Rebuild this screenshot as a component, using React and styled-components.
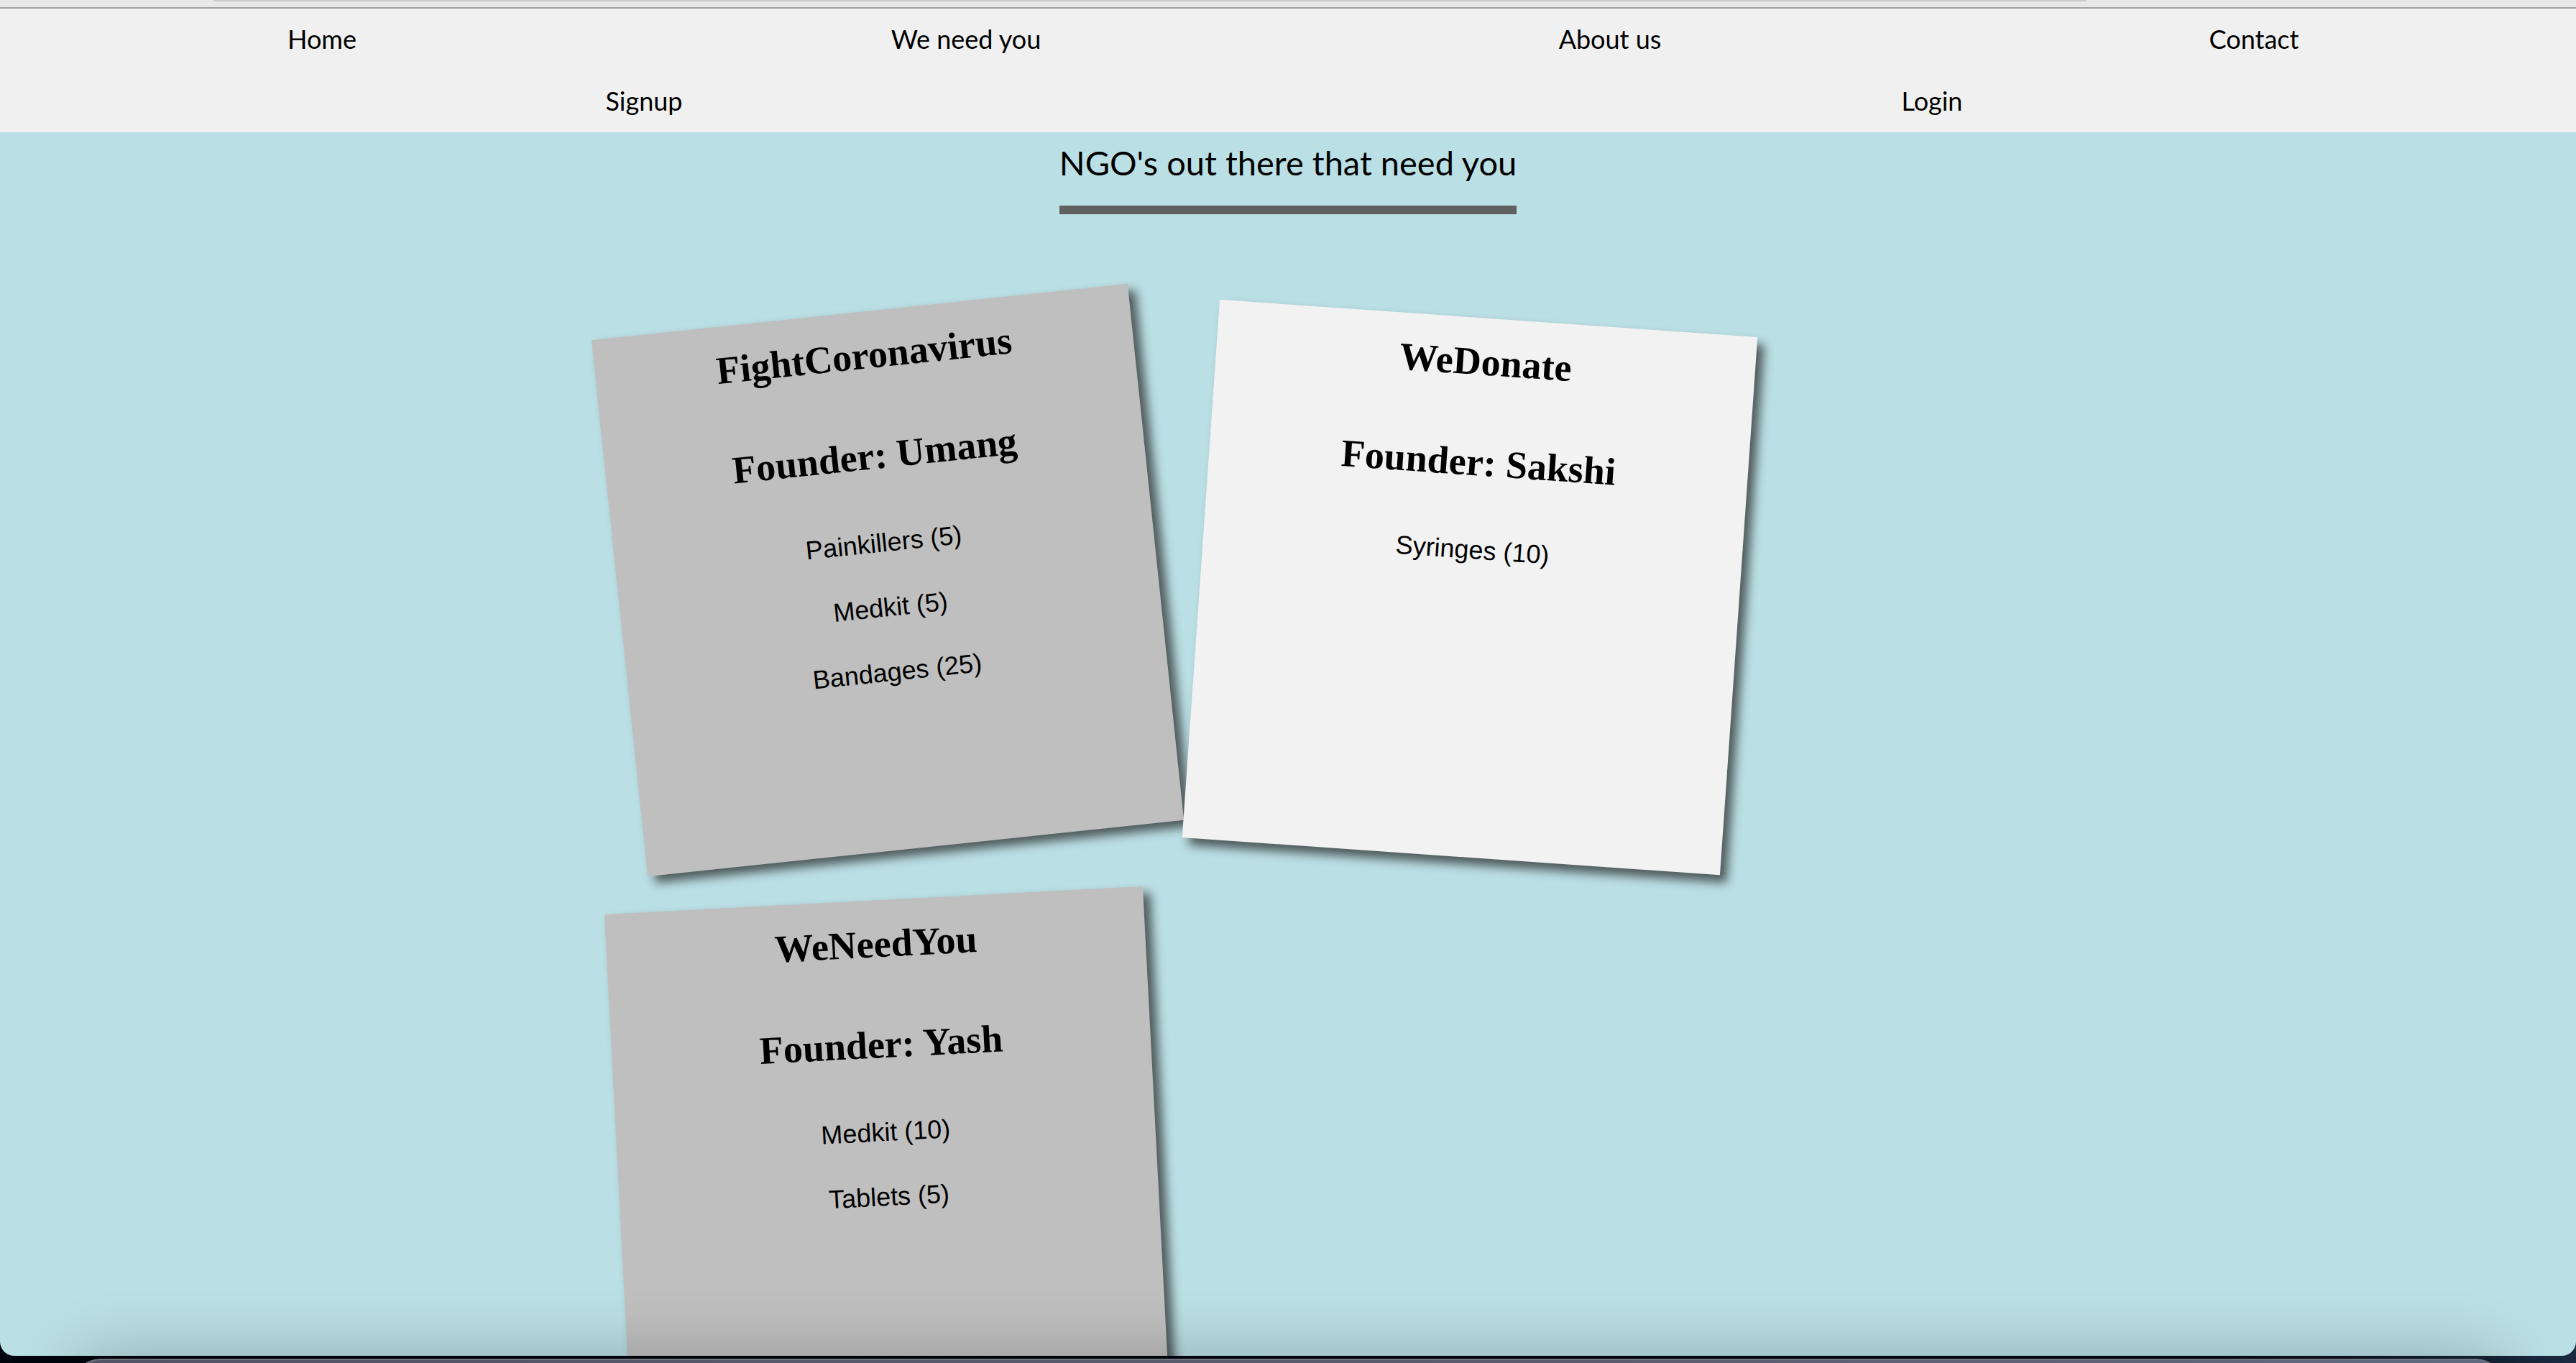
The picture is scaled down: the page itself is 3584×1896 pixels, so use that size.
import React from "react";
import styled, { createGlobalStyle } from "styled-components";

const GlobalStyle = createGlobalStyle`
  *, *::before, *::after { box-sizing: border-box; }
  body { margin: 0; background: #01040b; color: #000; }
  h1, h2, p, ul { margin: 0; padding: 0; }
  ul { list-style: none; }
`;

const Desktop = styled.div`
  display: flex;
  flex-direction: column;
  height: 100vh;
  overflow: hidden;
  background: linear-gradient(to right, #01040b 0%, #03070f 85%, #1c2a40 100%);
`;

const BrowserWindow = styled.div`
  display: flex;
  flex-direction: column;
  flex: 1;
  min-height: 0;
  overflow: hidden;
  border-radius: 0 0 20px 20px;
  background: #badfe4;
`;

const Toolbar = styled.div`
  flex: none;
  height: 12px;
  padding: 0 19% 0 8.3%;
  background: #e8e8e8;
  border-bottom: 2px solid #a0a0a0;
`;

const AddressBar = styled.div`
  height: 2px;
  background: #c8c8c8;
  border-radius: 0 0 6px 6px;
`;

const Nav = styled.nav`
  flex: none;
  background: #f0f0f0;
`;

const NavRow = styled.ul`
  display: flex;
`;

const NavItem = styled.li`
  flex: 1;
  text-align: center;
`;

const NavLink = styled.a`
  display: block;
  width: fit-content;
  margin: 0 auto;
  padding-bottom: 2px;
  font: 400 36px/84px Lato, sans-serif;
  color: #000;
  text-decoration: none;
`;

const Main = styled.main`
  display: flex;
  flex-direction: column;
  align-items: center;
  gap: 134px;
`;

const Heading = styled.h1`
  padding: 12px 0 30px;
  border-bottom: 12px solid #606060;
  font: 400 47px/60px Lato, sans-serif;
`;

const Board = styled.ul`
  display: flex;
  flex-wrap: wrap;
  gap: 60px;
  width: 52%;
`;

const Note = styled.li`
  display: flex;
  flex-direction: column;
  align-items: center;
  width: 750px;
  height: 750px;
  padding-top: 30px;
  background: ${(p) => (p.$light ? "#f2f2f2" : "#bfbfbf")};
  box-shadow: 10px 10px 14px rgba(33, 33, 33, 0.7);
  transform: rotate(${(p) => p.$tilt}deg);

  &:nth-child(even) { margin-top: 10px; }
`;

const NoteTitles = styled.div`
  display: flex;
  flex-direction: column;
  gap: 78px;
  margin-bottom: 70px;
  text-align: center;
`;

const NoteTitle = styled.h2`
  font: 700 54px/62px "Liberation Serif", serif;
`;

const Supplies = styled.ul`
  display: flex;
  flex-direction: column;
  gap: 48px;
`;

const Supply = styled.li`
  font: 400 36px/42px "Liberation Sans", sans-serif;
  text-align: center;
`;

const Dock = styled.div`
  position: relative;
  flex: none;
  height: 80px;
  margin: 4px 100px -74px;
  border-top: 2px solid #72757f;
  border-radius: 40px 40px 0 0;
  background: linear-gradient(to right, #555464, #5b5c6c 60%, #5f6a80);
  box-shadow: 0 0 90px rgba(0, 0, 0, 0.26);
`;

const links = [
  ["Home", "We need you", "About us", "Contact"],
  ["Signup", "Login"],
];

const ngos = [
  { name: "FightCoronavirus", founder: "Umang", tilt: -6, needs: [["Painkillers", 5], ["Medkit", 5], ["Bandages", 25]] },
  { name: "WeDonate", founder: "Sakshi", tilt: 4, light: true, needs: [["Syringes", 10]] },
  { name: "WeNeedYou", founder: "Yash", tilt: -3, needs: [["Medkit", 10], ["Tablets", 5]] },
];

export default function App() {
  return (
    <>
      <GlobalStyle />
      <Desktop>
        <BrowserWindow>
          <Toolbar><AddressBar /></Toolbar>
          <Nav>
            {links.map((row) => (
              <NavRow key={row[0]}>
                {row.map((label) => (
                  <NavItem key={label}><NavLink href="#">{label}</NavLink></NavItem>
                ))}
              </NavRow>
            ))}
          </Nav>
          <Main>
            <Heading>NGO's out there that need you</Heading>
            <Board>
              {ngos.map((ngo) => (
                <Note key={ngo.name} $tilt={ngo.tilt} $light={ngo.light}>
                  <NoteTitles>
                    <NoteTitle>{ngo.name}</NoteTitle>
                    <NoteTitle>{`Founder: ${ngo.founder}`}</NoteTitle>
                  </NoteTitles>
                  <Supplies>
                    {ngo.needs.map(([item, count]) => (
                      <Supply key={item}>{`${item} (${count})`}</Supply>
                    ))}
                  </Supplies>
                </Note>
              ))}
            </Board>
          </Main>
        </BrowserWindow>
        <Dock />
      </Desktop>
    </>
  );
}
